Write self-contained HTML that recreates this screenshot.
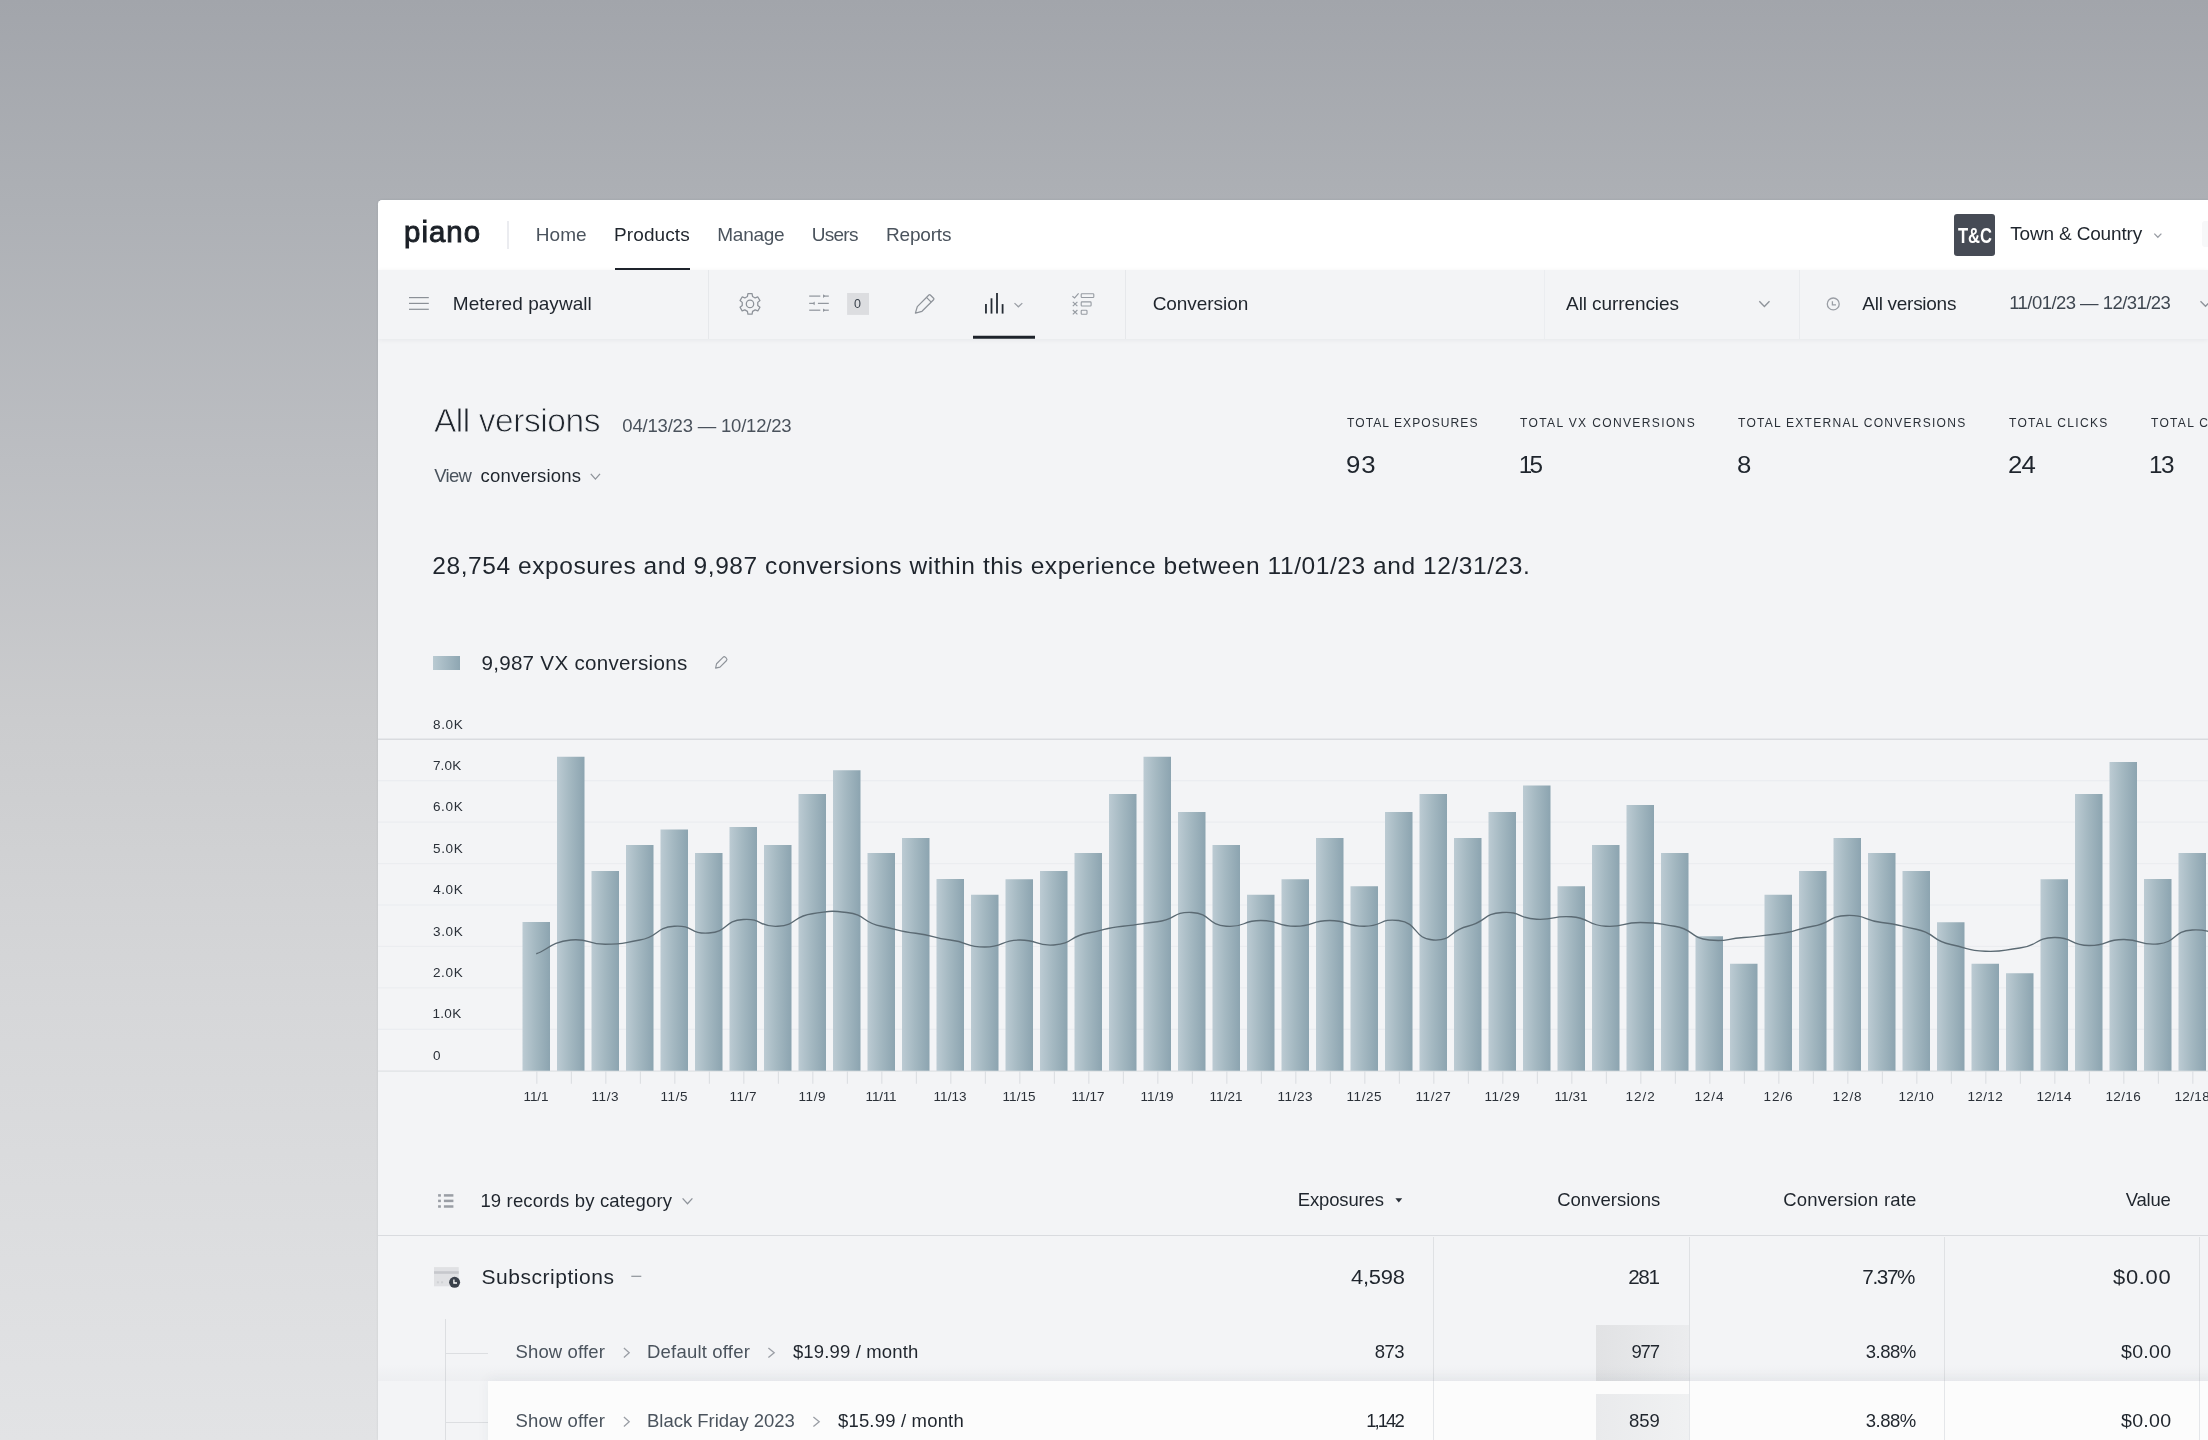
<!DOCTYPE html>
<html lang="en"><head><meta charset="utf-8"><title>Piano – Metered paywall – Conversion</title>
<style>
html,body{margin:0;padding:0}
body{width:2208px;height:1440px;overflow:hidden;position:relative;font-family:"Liberation Sans",sans-serif;
 background:linear-gradient(180deg,#a2a5ab 0%,#adb0b5 14%,#bcbec2 32%,#cbccce 50%,#d6d7d9 70%,#e2e3e5 100%)}
#win{position:absolute;left:378px;top:200px;width:1830px;height:1240px;background:#f3f4f6;border-top-left-radius:4.5px;overflow:hidden;box-shadow:0 0 2.5px rgba(30,35,45,.10)}
.abs{position:absolute}
.t{position:absolute;white-space:pre;line-height:1}
#nav{position:absolute;left:0;top:0;width:1830px;height:70px;background:#fff}
#sub{position:absolute;left:0;top:70px;width:1830px;height:68.5px;background:#f3f4f6;box-shadow:0 1px 5px rgba(20,30,50,.06)}
#tx{position:absolute;left:0;top:0;width:1830px;height:1240px;will-change:transform}
</style></head>
<body>
<div id="win">
<div id="nav"></div><div id="sub"></div>
<div class="abs" style="left:129.00px;top:21.20px;width:2.00px;height:27.70px;background:#ebecf0;"></div>
<div class="abs" style="left:237.00px;top:68.00px;width:75.00px;height:2.00px;background:#1e232b;"></div>
<div class="abs" style="left:1576.10px;top:14.10px;width:41.40px;height:41.50px;background:#464b55;border-radius:3px"></div>
<div class="abs" style="left:1824.00px;top:21.00px;width:8.00px;height:26.00px;background:#f7f8f9;border-radius:3px"></div>
<div class="abs" style="left:330.25px;top:70.00px;width:1.00px;height:68.50px;background:#e6e8eb;"></div>
<div class="abs" style="left:746.50px;top:70.00px;width:1.00px;height:68.50px;background:#e6e8eb;"></div>
<div class="abs" style="left:1165.75px;top:70.00px;width:1.00px;height:68.50px;background:#ebedf0;"></div>
<div class="abs" style="left:1420.75px;top:70.00px;width:1.00px;height:68.50px;background:#e9ebee;"></div>
<div class="abs" style="left:54.90px;top:456.00px;width:27.20px;height:13.60px;background:linear-gradient(90deg,#b9cad2,#8ea6b2);"></div>
<svg class="abs" style="left:0;top:500px" width="1830" height="420" viewBox="378 700 1830 420">
<defs><linearGradient id="bg" x1="0" x2="1" y1="0" y2="0"><stop offset="0" stop-color="#bccbd3"/><stop offset="0.45" stop-color="#a5b9c2"/><stop offset="1" stop-color="#8ca4b0"/></linearGradient></defs>
<rect x="378" y="738.50" width="1830" height="1.5" fill="#d9dbdf"/>
<rect x="378" y="780.09" width="1830" height="1.2" fill="#ebedf0"/>
<rect x="378" y="821.52" width="1830" height="1.2" fill="#ebedf0"/>
<rect x="378" y="862.96" width="1830" height="1.2" fill="#ebedf0"/>
<rect x="378" y="904.40" width="1830" height="1.2" fill="#ebedf0"/>
<rect x="378" y="945.84" width="1830" height="1.2" fill="#ebedf0"/>
<rect x="378" y="987.27" width="1830" height="1.2" fill="#ebedf0"/>
<rect x="378" y="1028.71" width="1830" height="1.2" fill="#ebedf0"/>
<rect x="378" y="1070.45" width="1830" height="1.3" fill="#e0e2e5"/>
<rect x="536.35" y="1071.25" width="1" height="12.5" fill="#d9dce0"/>
<rect x="570.85" y="1071.25" width="1" height="12.5" fill="#d9dce0"/>
<rect x="605.35" y="1071.25" width="1" height="12.5" fill="#d9dce0"/>
<rect x="639.85" y="1071.25" width="1" height="12.5" fill="#d9dce0"/>
<rect x="674.35" y="1071.25" width="1" height="12.5" fill="#d9dce0"/>
<rect x="708.85" y="1071.25" width="1" height="12.5" fill="#d9dce0"/>
<rect x="743.35" y="1071.25" width="1" height="12.5" fill="#d9dce0"/>
<rect x="777.85" y="1071.25" width="1" height="12.5" fill="#d9dce0"/>
<rect x="812.35" y="1071.25" width="1" height="12.5" fill="#d9dce0"/>
<rect x="846.85" y="1071.25" width="1" height="12.5" fill="#d9dce0"/>
<rect x="881.35" y="1071.25" width="1" height="12.5" fill="#d9dce0"/>
<rect x="915.85" y="1071.25" width="1" height="12.5" fill="#d9dce0"/>
<rect x="950.35" y="1071.25" width="1" height="12.5" fill="#d9dce0"/>
<rect x="984.85" y="1071.25" width="1" height="12.5" fill="#d9dce0"/>
<rect x="1019.35" y="1071.25" width="1" height="12.5" fill="#d9dce0"/>
<rect x="1053.85" y="1071.25" width="1" height="12.5" fill="#d9dce0"/>
<rect x="1088.35" y="1071.25" width="1" height="12.5" fill="#d9dce0"/>
<rect x="1122.85" y="1071.25" width="1" height="12.5" fill="#d9dce0"/>
<rect x="1157.35" y="1071.25" width="1" height="12.5" fill="#d9dce0"/>
<rect x="1191.85" y="1071.25" width="1" height="12.5" fill="#d9dce0"/>
<rect x="1226.35" y="1071.25" width="1" height="12.5" fill="#d9dce0"/>
<rect x="1260.85" y="1071.25" width="1" height="12.5" fill="#d9dce0"/>
<rect x="1295.35" y="1071.25" width="1" height="12.5" fill="#d9dce0"/>
<rect x="1329.85" y="1071.25" width="1" height="12.5" fill="#d9dce0"/>
<rect x="1364.35" y="1071.25" width="1" height="12.5" fill="#d9dce0"/>
<rect x="1398.85" y="1071.25" width="1" height="12.5" fill="#d9dce0"/>
<rect x="1433.35" y="1071.25" width="1" height="12.5" fill="#d9dce0"/>
<rect x="1467.85" y="1071.25" width="1" height="12.5" fill="#d9dce0"/>
<rect x="1502.35" y="1071.25" width="1" height="12.5" fill="#d9dce0"/>
<rect x="1536.85" y="1071.25" width="1" height="12.5" fill="#d9dce0"/>
<rect x="1571.35" y="1071.25" width="1" height="12.5" fill="#d9dce0"/>
<rect x="1605.85" y="1071.25" width="1" height="12.5" fill="#d9dce0"/>
<rect x="1640.35" y="1071.25" width="1" height="12.5" fill="#d9dce0"/>
<rect x="1674.85" y="1071.25" width="1" height="12.5" fill="#d9dce0"/>
<rect x="1709.35" y="1071.25" width="1" height="12.5" fill="#d9dce0"/>
<rect x="1743.85" y="1071.25" width="1" height="12.5" fill="#d9dce0"/>
<rect x="1778.35" y="1071.25" width="1" height="12.5" fill="#d9dce0"/>
<rect x="1812.85" y="1071.25" width="1" height="12.5" fill="#d9dce0"/>
<rect x="1847.35" y="1071.25" width="1" height="12.5" fill="#d9dce0"/>
<rect x="1881.85" y="1071.25" width="1" height="12.5" fill="#d9dce0"/>
<rect x="1916.35" y="1071.25" width="1" height="12.5" fill="#d9dce0"/>
<rect x="1950.85" y="1071.25" width="1" height="12.5" fill="#d9dce0"/>
<rect x="1985.35" y="1071.25" width="1" height="12.5" fill="#d9dce0"/>
<rect x="2019.85" y="1071.25" width="1" height="12.5" fill="#d9dce0"/>
<rect x="2054.35" y="1071.25" width="1" height="12.5" fill="#d9dce0"/>
<rect x="2088.85" y="1071.25" width="1" height="12.5" fill="#d9dce0"/>
<rect x="2123.35" y="1071.25" width="1" height="12.5" fill="#d9dce0"/>
<rect x="2157.85" y="1071.25" width="1" height="12.5" fill="#d9dce0"/>
<rect x="2192.35" y="1071.25" width="1" height="12.5" fill="#d9dce0"/>
<rect x="2226.85" y="1071.25" width="1" height="12.5" fill="#d9dce0"/>
<rect x="522.50" y="922.00" width="27.50" height="148.75" fill="url(#bg)"/>
<rect x="557.00" y="756.75" width="27.50" height="314.00" fill="url(#bg)"/>
<rect x="591.50" y="871.00" width="27.50" height="199.75" fill="url(#bg)"/>
<rect x="626.00" y="845.00" width="27.50" height="225.75" fill="url(#bg)"/>
<rect x="660.50" y="829.50" width="27.50" height="241.25" fill="url(#bg)"/>
<rect x="695.00" y="853.00" width="27.50" height="217.75" fill="url(#bg)"/>
<rect x="729.50" y="827.00" width="27.50" height="243.75" fill="url(#bg)"/>
<rect x="764.00" y="845.00" width="27.50" height="225.75" fill="url(#bg)"/>
<rect x="798.50" y="794.00" width="27.50" height="276.75" fill="url(#bg)"/>
<rect x="833.00" y="770.25" width="27.50" height="300.50" fill="url(#bg)"/>
<rect x="867.50" y="853.00" width="27.50" height="217.75" fill="url(#bg)"/>
<rect x="902.00" y="838.00" width="27.50" height="232.75" fill="url(#bg)"/>
<rect x="936.50" y="879.00" width="27.50" height="191.75" fill="url(#bg)"/>
<rect x="971.00" y="894.75" width="27.50" height="176.00" fill="url(#bg)"/>
<rect x="1005.50" y="879.25" width="27.50" height="191.50" fill="url(#bg)"/>
<rect x="1040.00" y="871.00" width="27.50" height="199.75" fill="url(#bg)"/>
<rect x="1074.50" y="853.00" width="27.50" height="217.75" fill="url(#bg)"/>
<rect x="1109.00" y="794.00" width="27.50" height="276.75" fill="url(#bg)"/>
<rect x="1143.50" y="756.75" width="27.50" height="314.00" fill="url(#bg)"/>
<rect x="1178.00" y="812.00" width="27.50" height="258.75" fill="url(#bg)"/>
<rect x="1212.50" y="845.00" width="27.50" height="225.75" fill="url(#bg)"/>
<rect x="1247.00" y="894.75" width="27.50" height="176.00" fill="url(#bg)"/>
<rect x="1281.50" y="879.25" width="27.50" height="191.50" fill="url(#bg)"/>
<rect x="1316.00" y="838.00" width="27.50" height="232.75" fill="url(#bg)"/>
<rect x="1350.50" y="886.25" width="27.50" height="184.50" fill="url(#bg)"/>
<rect x="1385.00" y="812.00" width="27.50" height="258.75" fill="url(#bg)"/>
<rect x="1419.50" y="794.00" width="27.50" height="276.75" fill="url(#bg)"/>
<rect x="1454.00" y="838.00" width="27.50" height="232.75" fill="url(#bg)"/>
<rect x="1488.50" y="812.00" width="27.50" height="258.75" fill="url(#bg)"/>
<rect x="1523.00" y="785.50" width="27.50" height="285.25" fill="url(#bg)"/>
<rect x="1557.50" y="886.25" width="27.50" height="184.50" fill="url(#bg)"/>
<rect x="1592.00" y="845.00" width="27.50" height="225.75" fill="url(#bg)"/>
<rect x="1626.50" y="805.00" width="27.50" height="265.75" fill="url(#bg)"/>
<rect x="1661.00" y="853.00" width="27.50" height="217.75" fill="url(#bg)"/>
<rect x="1695.50" y="936.25" width="27.50" height="134.50" fill="url(#bg)"/>
<rect x="1730.00" y="963.75" width="27.50" height="107.00" fill="url(#bg)"/>
<rect x="1764.50" y="894.75" width="27.50" height="176.00" fill="url(#bg)"/>
<rect x="1799.00" y="871.00" width="27.50" height="199.75" fill="url(#bg)"/>
<rect x="1833.50" y="838.00" width="27.50" height="232.75" fill="url(#bg)"/>
<rect x="1868.00" y="853.00" width="27.50" height="217.75" fill="url(#bg)"/>
<rect x="1902.50" y="871.00" width="27.50" height="199.75" fill="url(#bg)"/>
<rect x="1937.00" y="922.25" width="27.50" height="148.50" fill="url(#bg)"/>
<rect x="1971.50" y="963.75" width="27.50" height="107.00" fill="url(#bg)"/>
<rect x="2006.00" y="973.25" width="27.50" height="97.50" fill="url(#bg)"/>
<rect x="2040.50" y="879.25" width="27.50" height="191.50" fill="url(#bg)"/>
<rect x="2075.00" y="794.00" width="27.50" height="276.75" fill="url(#bg)"/>
<rect x="2109.50" y="762.00" width="27.50" height="308.75" fill="url(#bg)"/>
<rect x="2144.00" y="879.00" width="27.50" height="191.75" fill="url(#bg)"/>
<rect x="2178.50" y="853.00" width="27.50" height="217.75" fill="url(#bg)"/>
<rect x="2213.00" y="900.00" width="27.50" height="170.75" fill="url(#bg)"/>
<path d="M536.25 953.75 C546.19 951.27 550.88 941.71 570.75 940.00 C590.62 938.29 585.38 944.25 605.25 944.25 C625.12 944.25 619.88 943.24 639.75 940.00 C659.62 936.76 654.38 927.51 674.25 926.25 C694.12 924.99 688.88 934.22 708.75 933.00 C728.62 931.78 723.38 920.72 743.25 919.50 C763.12 918.28 757.88 927.28 777.75 926.25 C797.62 925.22 792.38 916.23 812.25 913.75 C832.12 911.27 826.88 910.25 846.75 912.50 C866.62 914.75 861.38 922.51 881.25 926.25 C901.12 929.99 895.88 930.77 915.75 933.25 C935.62 935.73 930.38 937.52 950.25 940.00 C970.12 942.48 964.88 947.00 984.75 947.00 C1004.62 947.00 999.38 940.36 1019.25 940.00 C1039.12 939.64 1033.88 946.26 1053.75 945.00 C1073.62 943.74 1068.38 936.38 1088.25 933.00 C1108.12 929.62 1102.88 928.27 1122.75 926.25 C1142.62 924.23 1137.38 924.23 1157.25 921.75 C1177.12 919.27 1171.88 911.69 1191.75 912.50 C1211.62 913.31 1206.38 924.81 1226.25 926.25 C1246.12 927.69 1240.88 920.50 1260.75 920.50 C1280.62 920.50 1275.38 926.25 1295.25 926.25 C1315.12 926.25 1309.88 920.50 1329.75 920.50 C1349.62 920.50 1344.38 926.25 1364.25 926.25 C1384.12 926.25 1378.88 918.02 1398.75 920.50 C1418.62 922.98 1413.38 938.97 1433.25 940.00 C1453.12 941.03 1447.88 931.20 1467.75 926.25 C1487.62 921.30 1482.38 913.76 1502.25 912.50 C1522.12 911.24 1516.88 918.49 1536.75 919.25 C1556.62 920.01 1551.38 915.49 1571.25 916.75 C1591.12 918.01 1585.88 925.22 1605.75 926.25 C1625.62 927.28 1620.38 922.50 1640.25 922.50 C1660.12 922.50 1654.88 923.10 1674.75 926.25 C1694.62 929.40 1689.38 937.98 1709.25 940.00 C1729.12 942.02 1723.88 938.62 1743.75 937.50 C1763.62 936.38 1758.38 935.77 1778.25 933.75 C1798.12 931.73 1792.88 929.53 1812.75 926.25 C1832.62 922.97 1827.38 916.17 1847.25 915.50 C1867.12 914.83 1861.88 920.02 1881.75 922.50 C1901.62 924.98 1896.38 925.29 1916.25 929.25 C1936.12 933.21 1930.88 940.54 1950.75 944.50 C1970.62 948.46 1965.38 950.62 1985.25 951.25 C2005.12 951.88 1999.88 950.48 2019.75 948.00 C2039.62 945.52 2034.38 937.95 2054.25 937.50 C2074.12 937.05 2068.88 945.14 2088.75 945.50 C2108.62 945.86 2103.38 939.77 2123.25 939.50 C2143.12 939.23 2137.88 945.71 2157.75 944.00 C2177.62 942.29 2172.38 931.08 2192.25 930.00 C2212.12 928.92 2216.81 936.56 2226.75 938.00" fill="none" stroke="#5b6a73" stroke-width="1.3" stroke-linejoin="round"/>
</svg>
<div class="abs" style="left:0.00px;top:1035.10px;width:1830.00px;height:1.40px;background:#d9dbdf;"></div>
<div class="abs" style="left:1055.25px;top:1036.50px;width:1.00px;height:210.00px;background:#dfe1e4;"></div>
<div class="abs" style="left:1310.75px;top:1036.50px;width:1.00px;height:210.00px;background:#dfe1e4;"></div>
<div class="abs" style="left:1565.75px;top:1036.50px;width:1.00px;height:210.00px;background:#dfe1e4;"></div>
<div class="abs" style="left:1820.50px;top:1036.50px;width:1.00px;height:210.00px;background:#dfe1e4;"></div>
<div class="abs" style="left:1218.25px;top:1125.00px;width:92.50px;height:55.50px;background:linear-gradient(90deg,#e1e2e4,#ebecee);"></div>
<div class="abs" style="left:67.00px;top:1118.75px;width:1.00px;height:130.00px;background:#dcdee1;"></div>
<div class="abs" style="left:67.00px;top:1152.75px;width:42.50px;height:1.00px;background:#dcdee1;"></div>
<div class="abs" style="left:67.00px;top:1221.50px;width:42.50px;height:1.00px;background:#dcdee1;"></div>
<div class="abs" style="left:0.00px;top:1164.00px;width:1830.00px;height:16.50px;background:linear-gradient(180deg,rgba(60,70,90,0),rgba(60,70,90,.03));"></div>
<div class="abs" style="left:109.50px;top:1180.50px;width:1730.00px;height:70.00px;background:#fcfcfc;box-shadow:0 -2px 12px rgba(40,50,70,.05)"></div>
<div class="abs" style="left:1218.25px;top:1194.25px;width:92.50px;height:50.00px;background:linear-gradient(90deg,#e9eaec,#f0f1f2);"></div>
<div class="abs" style="left:1055.25px;top:1180.50px;width:1.00px;height:70.00px;background:#e4e6e9;"></div>
<div class="abs" style="left:1310.75px;top:1180.50px;width:1.00px;height:70.00px;background:#e4e6e9;"></div>
<div class="abs" style="left:1565.75px;top:1180.50px;width:1.00px;height:70.00px;background:#e4e6e9;"></div>
<div class="abs" style="left:1820.50px;top:1180.50px;width:1.00px;height:70.00px;background:#e4e6e9;"></div>
<svg class="abs" style="left:0;top:0" width="1830" height="1240" viewBox="378 200 1830 1240"><path d="M409.00 297.60 L428.80 297.60" stroke="#8b9097" stroke-width="1.20" stroke-linecap="butt" fill="none"/>
<path d="M409.00 303.40 L428.80 303.40" stroke="#8b9097" stroke-width="1.20" stroke-linecap="butt" fill="none"/>
<path d="M409.00 309.30 L428.80 309.30" stroke="#8b9097" stroke-width="1.20" stroke-linecap="butt" fill="none"/>
<path d="M747.43 296.43 L747.91 293.61 L752.09 293.61 L752.57 296.43 L755.18 297.94 L757.86 296.94 L759.96 300.57 L757.75 302.39 L757.75 305.41 L759.96 307.23 L757.86 310.86 L755.18 309.86 L752.57 311.37 L752.09 314.19 L747.91 314.19 L747.43 311.37 L744.82 309.86 L742.14 310.86 L740.04 307.23 L742.25 305.41 L742.25 302.39 L740.04 300.57 L742.14 296.94 L744.82 297.94Z" fill="none" stroke="#8e939a" stroke-width="1.25" stroke-linejoin="round"/><circle cx="750.00" cy="303.90" r="3.70" fill="none" stroke="#8e939a" stroke-width="1.25"/>
<path d="M809.20 296.10 L820.30 296.10" stroke="#92979e" stroke-width="1.25" stroke-linecap="butt" fill="none"/>
<path d="M823.40 296.10 L828.80 296.10" stroke="#92979e" stroke-width="1.25" stroke-linecap="butt" fill="none"/>
<path d="M823.00 294.30 v3.6 l2.4 -1.8z" fill="#92979e"/>
<path d="M809.20 303.40 L814.30 303.40" stroke="#92979e" stroke-width="1.25" stroke-linecap="butt" fill="none"/>
<path d="M817.90 303.40 L828.80 303.40" stroke="#92979e" stroke-width="1.25" stroke-linecap="butt" fill="none"/>
<path d="M814.70 301.60 v3.6 l-2.4 -1.8z" fill="#92979e"/>
<path d="M809.20 310.20 L820.30 310.20" stroke="#92979e" stroke-width="1.25" stroke-linecap="butt" fill="none"/>
<path d="M823.40 310.20 L828.80 310.20" stroke="#92979e" stroke-width="1.25" stroke-linecap="butt" fill="none"/>
<path d="M823.00 308.40 v3.6 l2.4 -1.8z" fill="#92979e"/>
<rect x="847.1" y="293" width="21.9" height="21.9" fill="#dcdde0"/>
<path d="M915.40 313.20 L917.31 306.62 L928.91 295.03 Q929.61 294.32 930.32 295.03 L933.57 298.28 Q934.28 298.99 933.57 299.69 L921.98 311.29 Z" fill="none" stroke="#8e939a" stroke-width="1.25" stroke-linejoin="round"/><path d="M926.50 297.43 L931.17 302.10" stroke="#8e939a" stroke-width="1.25"/>
<path d="M985.96 304.10 L985.96 313.60" stroke="#242b34" stroke-width="1.80" stroke-linecap="butt" fill="none"/>
<path d="M991.50 298.30 L991.50 313.60" stroke="#242b34" stroke-width="1.80" stroke-linecap="butt" fill="none"/>
<path d="M997.00 292.90 L997.00 313.60" stroke="#242b34" stroke-width="1.80" stroke-linecap="butt" fill="none"/>
<path d="M1002.60 304.10 L1002.60 313.60" stroke="#242b34" stroke-width="1.80" stroke-linecap="butt" fill="none"/>
<path d="M1014.50 303.10 L1018.40 306.80 L1022.30 303.10" stroke="#9a9ea5" stroke-width="1.30" fill="none" stroke-linejoin="miter"/>
<rect x="973" y="335.75" width="62" height="3" fill="#1e232b"/>
<path d="M1072.4 296.2 L1074.6 298 L1078.6 293.4" fill="none" stroke="#969ba2" stroke-width="1.15"/>
<rect x="1081.2" y="293.7" width="12.6" height="3.8" rx="0.8" fill="none" stroke="#969ba2" stroke-width="1.1"/>
<path d="M1072.8 301.80 l4.6 4.4 M1077.4 301.80 l-4.6 4.4" fill="none" stroke="#969ba2" stroke-width="1.15"/>
<path d="M1072.8 310.00 l4.6 4.4 M1077.4 310.00 l-4.6 4.4" fill="none" stroke="#969ba2" stroke-width="1.15"/>
<rect x="1081.2" y="301.9" width="9.9" height="4.1" rx="0.8" fill="none" stroke="#969ba2" stroke-width="1.1"/>
<rect x="1081.2" y="310.2" width="5.8" height="4.1" rx="0.8" fill="none" stroke="#969ba2" stroke-width="1.1"/>
<path d="M1759.30 301.30 L1764.40 306.40 L1769.50 301.30" stroke="#8e939a" stroke-width="1.40" fill="none" stroke-linejoin="miter"/>
<circle cx="1833.25" cy="303.95" r="5.95" fill="none" stroke="#9a9ea5" stroke-width="1.3"/>
<path d="M1832.4 301.2 V304.8 H1836" fill="none" stroke="#9a9ea5" stroke-width="1.3"/>
<path d="M2200.50 301.20 L2205.50 306.20 L2210.50 301.20" stroke="#8e939a" stroke-width="1.40" fill="none" stroke-linejoin="miter"/>
<path d="M2154.30 233.60 L2157.85 237.20 L2161.40 233.60" stroke="#9a9ea5" stroke-width="1.30" fill="none" stroke-linejoin="miter"/>
<path d="M590.80 473.90 L595.40 479.10 L600.00 473.90" stroke="#8e939a" stroke-width="1.30" fill="none" stroke-linejoin="miter"/>
<path d="M715.60 668.10 L716.59 663.72 L722.95 657.35 Q724.23 656.08 725.50 657.35 L726.35 658.20 Q727.62 659.47 726.35 660.75 L719.98 667.11 Z" fill="none" stroke="#8e939a" stroke-width="1.15" stroke-linejoin="round"/>
<rect x="438.1" y="1194.15" width="2.8" height="2.5" fill="#9a9ea5"/>
<rect x="443.9" y="1194.15" width="9.5" height="2.5" fill="#9a9ea5"/>
<rect x="438.1" y="1199.65" width="2.8" height="2.5" fill="#9a9ea5"/>
<rect x="443.9" y="1199.65" width="9.5" height="2.5" fill="#9a9ea5"/>
<rect x="438.1" y="1205.25" width="2.8" height="2.5" fill="#9a9ea5"/>
<rect x="443.9" y="1205.25" width="9.5" height="2.5" fill="#9a9ea5"/>
<path d="M682.60 1198.40 L687.50 1203.70 L692.40 1198.40" stroke="#8e939a" stroke-width="1.30" fill="none" stroke-linejoin="miter"/>
<path d="M1395.4 1198.2 h6.8 l-3.4 4.4z" fill="#2a3038"/>
<rect x="434" y="1267.1" width="24.75" height="19.2" fill="#e0e1e4"/>
<rect x="434" y="1271.2" width="24.75" height="2.6" fill="#c6c8cc"/>
<rect x="436.9" y="1281.3" width="2" height="2" fill="#cfd1d4"/><rect x="441.1" y="1281.3" width="2" height="2" fill="#cfd1d4"/>
<circle cx="454.6" cy="1282.3" r="5.5" fill="#3a414b"/>
<path d="M453.9 1279.6 V1283 H457" fill="none" stroke="#fff" stroke-width="1.3" transform="translate(0,0)"/>
<path d="M631.30 1276.30 L641.30 1276.30" stroke="#8e939a" stroke-width="1.20" stroke-linecap="butt" fill="none"/>
<path d="M623.90 1348.05 L629.20 1352.75 L623.90 1357.45" stroke="#9a9ea5" stroke-width="1.30" fill="none"/>
<path d="M768.40 1348.05 L774.20 1352.75 L768.40 1357.45" stroke="#9a9ea5" stroke-width="1.30" fill="none"/>
<path d="M623.90 1417.05 L629.20 1421.75 L623.90 1426.45" stroke="#9a9ea5" stroke-width="1.30" fill="none"/>
<path d="M813.40 1417.05 L819.20 1421.75 L813.40 1426.45" stroke="#9a9ea5" stroke-width="1.30" fill="none"/></svg>
<div id="tx"><span class="t" style="left:26.01px;top:17.00px;font-size:29.40px;letter-spacing:1.048px;color:#1b2027;-webkit-text-stroke:0.95px #1b2027;">piano</span>
<span class="t" style="left:157.80px;top:25.00px;font-size:19.00px;letter-spacing:0.028px;color:#4a535d;">Home</span>
<span class="t" style="left:236.05px;top:25.00px;font-size:19.00px;letter-spacing:0.089px;color:#1f252d;">Products</span>
<span class="t" style="left:339.30px;top:25.00px;font-size:19.00px;letter-spacing:-0.279px;color:#4a535d;">Manage</span>
<span class="t" style="left:433.65px;top:25.00px;font-size:19.00px;letter-spacing:-0.716px;color:#4a535d;">Users</span>
<span class="t" style="left:508.05px;top:25.00px;font-size:19.00px;letter-spacing:-0.196px;color:#4a535d;">Reports</span>
<span class="t" style="left:1632.25px;top:24.00px;font-size:19.00px;letter-spacing:-0.170px;color:#1f252d;">Town &amp; Country</span>
<span class="t" style="left:1579.75px;top:25.00px;font-size:21.60px;letter-spacing:0.000px;color:#fff;font-weight:700;transform:scaleX(0.7667);transform-origin:0 0;">T&amp;C</span>
<span class="t" style="left:74.80px;top:94.00px;font-size:19.00px;letter-spacing:0.045px;color:#1f252d;">Metered paywall</span>
<span class="t" style="left:476.05px;top:98.00px;font-size:12.50px;letter-spacing:0.000px;color:#3a424c;">0</span>
<span class="t" style="left:774.65px;top:94.00px;font-size:19.00px;letter-spacing:-0.060px;color:#1f252d;">Conversion</span>
<span class="t" style="left:1188.05px;top:94.00px;font-size:19.00px;letter-spacing:-0.091px;color:#1f252d;">All currencies</span>
<span class="t" style="left:1484.30px;top:94.00px;font-size:19.00px;letter-spacing:-0.277px;color:#1f252d;">All versions</span>
<span class="t" style="left:1631.25px;top:94.00px;font-size:18.50px;letter-spacing:-0.547px;color:#3f4751;">11/01/23 — 12/31/23</span>
<span class="t" style="left:55.95px;top:204.00px;font-size:33.50px;letter-spacing:-0.430px;color:#1f252d;-webkit-text-stroke:0.8px #f3f4f6;">All versions</span>
<span class="t" style="left:244.35px;top:217.00px;font-size:18.50px;letter-spacing:-0.198px;color:#4a525c;">04/13/23 — 10/12/23</span>
<span class="t" style="left:56.30px;top:267.00px;font-size:18.50px;letter-spacing:-0.718px;color:#4a535d;">View</span>
<span class="t" style="left:102.60px;top:267.00px;font-size:18.50px;letter-spacing:0.164px;color:#1f252d;">conversions</span>
<span class="t" style="left:968.53px;top:216.00px;font-size:13.40px;letter-spacing:1.178px;color:#2a3038;transform:scaleX(0.9000);transform-origin:0 0;">TOTAL EXPOSURES</span>
<span class="t" style="left:1142.28px;top:216.00px;font-size:13.40px;letter-spacing:1.496px;color:#2a3038;transform:scaleX(0.9000);transform-origin:0 0;">TOTAL VX CONVERSIONS</span>
<span class="t" style="left:1360.28px;top:216.00px;font-size:13.40px;letter-spacing:1.378px;color:#2a3038;transform:scaleX(0.9000);transform-origin:0 0;">TOTAL EXTERNAL CONVERSIONS</span>
<span class="t" style="left:1631.28px;top:216.00px;font-size:13.40px;letter-spacing:1.423px;color:#2a3038;transform:scaleX(0.9000);transform-origin:0 0;">TOTAL CLICKS</span>
<span class="t" style="left:1772.53px;top:216.00px;font-size:13.40px;letter-spacing:1.423px;color:#2a3038;transform:scaleX(0.9000);transform-origin:0 0;">TOTAL CLOSES</span>
<span class="t" style="left:967.63px;top:253.00px;font-size:24.30px;letter-spacing:0.793px;color:#1f252d;transform:scaleX(1.0600);transform-origin:0 0;">93</span>
<span class="t" style="left:1140.75px;top:253.00px;font-size:24.30px;letter-spacing:-2.715px;color:#1f252d;">15</span>
<span class="t" style="left:1359.49px;top:253.00px;font-size:24.30px;letter-spacing:0.000px;color:#1f252d;transform:scaleX(1.0600);transform-origin:0 0;">8</span>
<span class="t" style="left:1630.28px;top:253.00px;font-size:24.30px;letter-spacing:-0.686px;color:#1f252d;transform:scaleX(1.0600);transform-origin:0 0;">24</span>
<span class="t" style="left:1771.00px;top:253.00px;font-size:24.30px;letter-spacing:-1.465px;color:#1f252d;">13</span>
<span class="t" style="left:54.35px;top:354.00px;font-size:24.50px;letter-spacing:0.569px;color:#1f252d;">28,754 exposures and 9,987 conversions within this experience between 11/01/23 and 12/31/23.</span>
<span class="t" style="left:103.40px;top:453.00px;font-size:20.60px;letter-spacing:0.287px;color:#1f252d;">9,987 VX conversions</span>
<span class="t" style="left:55.05px;top:518.00px;font-size:13.50px;letter-spacing:0.611px;color:#2a3038;">8.0K</span>
<span class="t" style="left:54.95px;top:559.00px;font-size:13.50px;letter-spacing:0.144px;color:#2a3038;">7.0K</span>
<span class="t" style="left:54.95px;top:600.00px;font-size:13.50px;letter-spacing:0.644px;color:#2a3038;">6.0K</span>
<span class="t" style="left:55.05px;top:642.00px;font-size:13.50px;letter-spacing:0.611px;color:#2a3038;">5.0K</span>
<span class="t" style="left:55.25px;top:683.00px;font-size:13.50px;letter-spacing:0.544px;color:#2a3038;">4.0K</span>
<span class="t" style="left:55.05px;top:725.00px;font-size:13.50px;letter-spacing:0.611px;color:#2a3038;">3.0K</span>
<span class="t" style="left:54.95px;top:766.00px;font-size:13.50px;letter-spacing:0.644px;color:#2a3038;">2.0K</span>
<span class="t" style="left:54.55px;top:807.00px;font-size:13.50px;letter-spacing:0.278px;color:#2a3038;">1.0K</span>
<span class="t" style="left:55.05px;top:849.00px;font-size:13.50px;letter-spacing:0.000px;color:#2a3038;">0</span>
<span class="t" style="left:102.40px;top:992.00px;font-size:18.50px;letter-spacing:0.163px;color:#1f252d;">19 records by category</span>
<span class="t" style="left:919.80px;top:991.00px;font-size:18.50px;letter-spacing:-0.157px;color:#1f252d;">Exposures</span>
<span class="t" style="left:1179.15px;top:991.00px;font-size:18.50px;letter-spacing:0.023px;color:#1f252d;">Conversions</span>
<span class="t" style="left:1405.15px;top:991.00px;font-size:18.50px;letter-spacing:0.185px;color:#1f252d;">Conversion rate</span>
<span class="t" style="left:1747.80px;top:991.00px;font-size:18.50px;letter-spacing:-0.226px;color:#1f252d;">Value</span>
<span class="t" style="left:103.40px;top:1066.00px;font-size:21.00px;letter-spacing:0.545px;color:#1f252d;">Subscriptions</span>
<span class="t" style="left:972.63px;top:1067.00px;font-size:20.70px;letter-spacing:-0.206px;color:#1f252d;transform:scaleX(1.0600);transform-origin:0 0;">4,598</span>
<span class="t" style="left:1250.30px;top:1067.00px;font-size:20.70px;letter-spacing:-1.437px;color:#1f252d;">281</span>
<span class="t" style="left:1484.30px;top:1067.00px;font-size:20.70px;letter-spacing:-1.372px;color:#1f252d;">7.37%</span>
<span class="t" style="left:1735.09px;top:1067.00px;font-size:20.70px;letter-spacing:0.662px;color:#1f252d;transform:scaleX(1.0600);transform-origin:0 0;">$0.00</span>
<span class="t" style="left:137.50px;top:1143.00px;font-size:18.50px;letter-spacing:0.134px;color:#4a535d;">Show offer</span>
<span class="t" style="left:269.05px;top:1143.00px;font-size:18.50px;letter-spacing:0.193px;color:#4a535d;">Default offer</span>
<span class="t" style="left:414.95px;top:1143.00px;font-size:18.50px;letter-spacing:0.144px;color:#1f252d;">$19.99 / month</span>
<span class="t" style="left:996.75px;top:1143.00px;font-size:18.50px;letter-spacing:-0.514px;color:#1f252d;">873</span>
<span class="t" style="left:1253.50px;top:1143.00px;font-size:18.50px;letter-spacing:-1.214px;color:#1f252d;">977</span>
<span class="t" style="left:1487.85px;top:1143.00px;font-size:18.50px;letter-spacing:-0.527px;color:#1f252d;">3.88%</span>
<span class="t" style="left:1742.69px;top:1143.00px;font-size:18.50px;letter-spacing:0.239px;color:#1f252d;transform:scaleX(1.0600);transform-origin:0 0;">$0.00</span>
<span class="t" style="left:137.50px;top:1212.00px;font-size:18.50px;letter-spacing:0.134px;color:#4a535d;">Show offer</span>
<span class="t" style="left:269.05px;top:1212.00px;font-size:18.50px;letter-spacing:-0.018px;color:#4a535d;">Black Friday 2023</span>
<span class="t" style="left:459.95px;top:1212.00px;font-size:18.50px;letter-spacing:0.182px;color:#1f252d;">$15.99 / month</span>
<span class="t" style="left:988.15px;top:1212.00px;font-size:18.50px;letter-spacing:-1.939px;color:#1f252d;">1,142</span>
<span class="t" style="left:1251.00px;top:1212.00px;font-size:18.50px;letter-spacing:-0.014px;color:#1f252d;">859</span>
<span class="t" style="left:1487.85px;top:1212.00px;font-size:18.50px;letter-spacing:-0.527px;color:#1f252d;">3.88%</span>
<span class="t" style="left:1742.69px;top:1212.00px;font-size:18.50px;letter-spacing:0.239px;color:#1f252d;transform:scaleX(1.0600);transform-origin:0 0;">$0.00</span>
<span class="t" style="left:145.62px;top:890.00px;font-size:13.50px;letter-spacing:-0.138px;color:#2a3038;">11/1</span>
<span class="t" style="left:213.50px;top:890.00px;font-size:13.50px;letter-spacing:0.578px;color:#2a3038;">11/3</span>
<span class="t" style="left:282.50px;top:890.00px;font-size:13.50px;letter-spacing:0.578px;color:#2a3038;">11/5</span>
<span class="t" style="left:351.50px;top:890.00px;font-size:13.50px;letter-spacing:0.612px;color:#2a3038;">11/7</span>
<span class="t" style="left:420.50px;top:890.00px;font-size:13.50px;letter-spacing:0.612px;color:#2a3038;">11/9</span>
<span class="t" style="left:487.62px;top:890.00px;font-size:13.50px;letter-spacing:-0.230px;color:#2a3038;">11/11</span>
<span class="t" style="left:555.50px;top:890.00px;font-size:13.50px;letter-spacing:0.057px;color:#2a3038;">11/13</span>
<span class="t" style="left:624.50px;top:890.00px;font-size:13.50px;letter-spacing:0.057px;color:#2a3038;">11/15</span>
<span class="t" style="left:693.50px;top:890.00px;font-size:13.50px;letter-spacing:0.082px;color:#2a3038;">11/17</span>
<span class="t" style="left:762.50px;top:890.00px;font-size:13.50px;letter-spacing:0.082px;color:#2a3038;">11/19</span>
<span class="t" style="left:831.50px;top:890.00px;font-size:13.50px;letter-spacing:0.082px;color:#2a3038;">11/21</span>
<span class="t" style="left:899.38px;top:890.00px;font-size:13.50px;letter-spacing:0.619px;color:#2a3038;">11/23</span>
<span class="t" style="left:968.38px;top:890.00px;font-size:13.50px;letter-spacing:0.619px;color:#2a3038;">11/25</span>
<span class="t" style="left:1037.38px;top:890.00px;font-size:13.50px;letter-spacing:0.644px;color:#2a3038;">11/27</span>
<span class="t" style="left:1106.38px;top:890.00px;font-size:13.50px;letter-spacing:0.644px;color:#2a3038;">11/29</span>
<span class="t" style="left:1176.50px;top:890.00px;font-size:13.50px;letter-spacing:0.082px;color:#2a3038;">11/31</span>
<span class="t" style="left:1247.38px;top:890.00px;font-size:13.50px;letter-spacing:1.028px;color:#2a3038;">12/2</span>
<span class="t" style="left:1316.38px;top:890.00px;font-size:13.50px;letter-spacing:0.928px;color:#2a3038;">12/4</span>
<span class="t" style="left:1385.38px;top:890.00px;font-size:13.50px;letter-spacing:0.994px;color:#2a3038;">12/6</span>
<span class="t" style="left:1454.38px;top:890.00px;font-size:13.50px;letter-spacing:0.994px;color:#2a3038;">12/8</span>
<span class="t" style="left:1520.38px;top:890.00px;font-size:13.50px;letter-spacing:0.369px;color:#2a3038;">12/10</span>
<span class="t" style="left:1589.38px;top:890.00px;font-size:13.50px;letter-spacing:0.394px;color:#2a3038;">12/12</span>
<span class="t" style="left:1658.38px;top:890.00px;font-size:13.50px;letter-spacing:0.319px;color:#2a3038;">12/14</span>
<span class="t" style="left:1727.38px;top:890.00px;font-size:13.50px;letter-spacing:0.369px;color:#2a3038;">12/16</span>
<span class="t" style="left:1796.38px;top:890.00px;font-size:13.50px;letter-spacing:0.369px;color:#2a3038;">12/18</span></div>
</div>
</body></html>
